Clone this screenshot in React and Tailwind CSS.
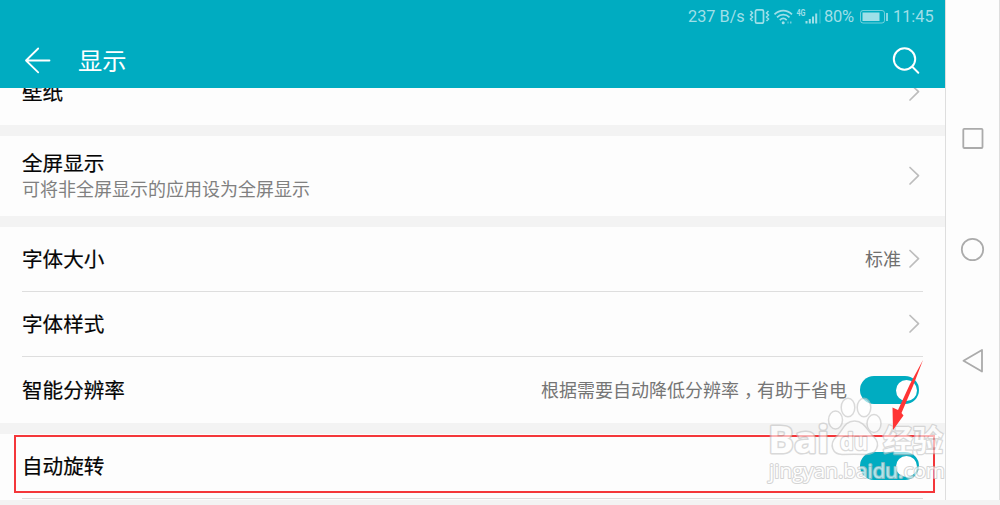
const Chevron = () => (
  <svg className="h-[20px] w-[12px] shrink-0" viewBox="0 0 12 20" fill="none" stroke="#bdbdbd" strokeWidth="1.7" strokeLinecap="round" strokeLinejoin="round">
    <path d="M2 1.5L10.500 9.700L2 18" />
  </svg>
)

const Toggle = () => (
  <div className="flex h-[28px] w-[59px] shrink-0 items-center justify-end rounded-full bg-[#00acc1] pr-[2px]">
    <div className="h-[21px] w-[21px] rounded-full bg-white" />
  </div>
)

const Label = ({ children }) => (
  <p className="pt-[2px] text-[20.6px] leading-[30px] text-[#050505] [-webkit-text-stroke:0.2px_#050505]">{children}</p>
)

const Divider = () => <div className="mx-[22px] h-px shrink-0 bg-[#dedede]" />

const Gap = () => <div className="h-[11px] shrink-0 bg-[#f3f3f3]" />

const StatusBar = () => (
  <div className="flex h-[33px] items-center pr-[10px] text-[#9fdfe8]">
    <span className="ml-auto w-[61px] pt-[2px] text-[16.3px] whitespace-nowrap">237 B/s</span>
    <svg className="h-[20px] w-[75px] shrink-0" viewBox="0 0 75 20" fill="none" stroke="#9fdfe8" strokeWidth="1.7">
      <rect x="6.5" y="2.8" width="8" height="13.4" rx="1.5" />
      <path d="M1.500 4l2 2-2 2 2 2-2 2 2 2M19.500 4l-2 2 2 2-2 2 2 2-2 2" strokeWidth="1.500" />
      <path d="M25.500 7.300c5-5 12.500-5 17.500 0M28 10.300c3.600-3.600 8.900-3.600 12.500 0M30.800 13.100c2.200-2.200 4.700-2.200 6.900 0" />
      <circle cx="34.200" cy="15.800" r="1.500" fill="#9fdfe8" stroke="none" />
      <path d="M38.500 15.500h1M41 15.500h1.500" strokeWidth="2" opacity=".7" />
      <text x="47.500" y="8.500" fontSize="8.500" fontWeight="700" fill="#9fdfe8" stroke="none" textLength="9" lengthAdjust="spacingAndGlyphs">4G</text>
      <path d="M57.500 14v2.500M60.800 12v4.500M64 9.500v7M67.200 6.500v10" strokeWidth="2" />
      <path d="M71 2.500v14" strokeWidth="1.200" opacity=".4" />
    </svg>
    <span className="w-[36px] pt-[2px] text-[16.5px] tracking-[-0.3px] whitespace-nowrap">80%</span>
    <svg className="h-[20px] w-[33px] shrink-0" viewBox="0 0 33 20" fill="none" stroke="#9fdfe8">
      <rect x="0.500" y="3.500" width="24" height="12.500" rx="2.500" opacity=".7" />
      <rect x="2.500" y="5.500" width="17" height="8.500" fill="#9fdfe8" stroke="none" />
      <path d="M27 6v8" strokeWidth="1.700" />
    </svg>
    <span className="w-[42px] pt-[2px] text-[16.3px] whitespace-nowrap">11:45</span>
  </div>
)

const Header = () => (
  <header className="flex h-[88px] shrink-0 flex-col bg-[#00acc1]">
    <StatusBar />
    <div className="flex h-[55px] items-center pr-[25px] pl-[24px] text-white">
      <svg className="h-[28px] w-[28px]" viewBox="0 0 28 28" fill="none" stroke="currentColor" strokeWidth="1.8" strokeLinecap="round" strokeLinejoin="round">
        <path d="M14.200 1.500L2 13.500L14.200 25.300M2 13.500H25.500" />
      </svg>
      <h1 className="ml-[26px] pt-[2px] text-[24.3px] leading-[36px]">显示</h1>
      <svg className="ml-auto h-[28px] w-[28px]" viewBox="0 0 28 28" fill="none" stroke="currentColor" strokeWidth="2" strokeLinecap="round">
        <circle cx="12.500" cy="12" r="10.700" />
        <path d="M20.300 19.800L26.300 25.700" />
      </svg>
    </div>
  </header>
)

const NavBar = () => (
  <nav className="flex w-[54px] shrink-0 justify-center border-r border-[#dedede] pt-[126px]">
    <svg className="h-[248px] w-[26px]" viewBox="0 0 26 248" fill="none" stroke="#ababab" strokeWidth="1.800" strokeLinejoin="round">
      <rect x="3.300" y="2.800" width="19.200" height="19.200" rx="1" />
      <circle cx="12.500" cy="123.500" r="10.700" />
      <path d="M22 224L3.500 234.700L22 245.500Z" />
    </svg>
  </nav>
)

const Watermark = () => (
  <svg className="absolute top-[390px] left-[760px] h-[100px] w-[190px]" viewBox="0 0 190 100">
    <g fill="#fff" stroke="#c4c4c4" strokeWidth="1.500" opacity=".62" fontWeight="700">
      <ellipse cx="75.500" cy="30" rx="7" ry="9" />
      <ellipse cx="88" cy="17.500" rx="6.800" ry="9.300" />
      <ellipse cx="104" cy="17.500" rx="6.800" ry="9.300" />
      <ellipse cx="114" cy="33.500" rx="7" ry="9" />
      <path d="M94.500 31C84 31 83 41 76 47C69 54 72 65 83 64.500C91 64 97 64 105 64.500C117 65 121 54 114 47C107 41 105 31 94.500 31Z" />
      {/* wide outline sits under the solid letters */}
      <g strokeWidth="3" strokeLinejoin="round" paintOrder="stroke">
        <text x="8" y="63" fontSize="38" fontFamily="Open Sans, sans-serif" textLength="61" lengthAdjust="spacingAndGlyphs">Bai</text>
        <text x="80" y="60" fontSize="24" strokeWidth="2.500" fontFamily="Open Sans, sans-serif" textLength="28" lengthAdjust="spacingAndGlyphs">du</text>
        <text x="123" y="61" fontSize="30" strokeWidth="2.500" fontFamily="Noto Sans CJK SC, sans-serif" textLength="60">经验</text>
      </g>
    </g>
    <text x="9" y="88" fontSize="20" fontFamily="Open Sans, sans-serif" fontWeight="500" fill="#fff" stroke="#c4c4c4" strokeWidth="2" strokeLinejoin="round" paintOrder="stroke" opacity=".7" textLength="176" lengthAdjust="spacingAndGlyphs">jingyan.baidu.com</text>
  </svg>
)

const App = () => {
  return (
    <div className="relative flex h-[505px] w-[1000px] flex-col overflow-hidden bg-[#f3f3f3] font-['Roboto','Noto_Sans_CJK_SC',sans-serif]">
      <div className="flex h-[500px] bg-[#fdfdfd]">
        <main className="flex w-[946px] flex-col border-r border-[#dedede]">
          <Header />

          <div className="flex h-[37px] shrink-0 items-start justify-between overflow-hidden pr-[25px] pl-[22px]">
            <div className="-mt-[12px]"><Label>壁纸</Label></div>
            <div className="-mt-[6px]"><Chevron /></div>
          </div>
          <Gap />

          <div className="flex h-[80px] shrink-0 items-center justify-between pr-[25px] pl-[22px]">
            <div className="flex flex-col pb-[3px]">
              <Label>全屏显示</Label>
              <p className="-mt-px text-[18px] leading-[24px] text-[#808080]">可将非全屏显示的应用设为全屏显示</p>
            </div>
            <Chevron />
          </div>
          <Gap />

          <div className="flex h-[64px] shrink-0 items-center pr-[25px] pl-[22px]">
            <Label>字体大小</Label>
            <span className="mr-[7px] ml-auto text-[18px] text-[#6f6f6f]">标准</span>
            <Chevron />
          </div>
          <Divider />

          <div className="flex h-[64px] shrink-0 items-center justify-between pr-[25px] pl-[22px]">
            <Label>字体样式</Label>
            <Chevron />
          </div>
          <Divider />

          <div className="flex h-[66px] shrink-0 items-center pr-[26px] pl-[22px]">
            <Label>智能分辨率</Label>
            <p className="mr-[13px] ml-auto flex text-[18px] text-[#757575]">
              <span>根据需要自动降低分辨率</span>
              <span className="w-[18px] pl-[5px] [font-feature-settings:'halt']">，</span>
              <span>有助于省电</span>
            </p>
            <Toggle />
          </div>
          <Gap />

          <div className="flex h-[64px] shrink-0 items-center justify-between pr-[26px] pl-[22px]">
            <Label>自动旋转</Label>
            <Toggle />
          </div>
          <Divider />
        </main>
        <NavBar />
      </div>

      {/* highlighted row */}
      <div className="absolute top-[435px] left-[14px] h-[58px] w-[921px] border-2 border-[#f4373a]" />
      <Watermark />
      <svg className="absolute top-[358px] left-[885px] h-[74px] w-[42px]" viewBox="0 0 42 74" fill="#ff3535">
        <path d="M38 2L25 26L13 52L7.500 49.500L8 72L18.500 57.500L16.500 55L28 28Z" />
      </svg>
    </div>
  )
}

export default App
